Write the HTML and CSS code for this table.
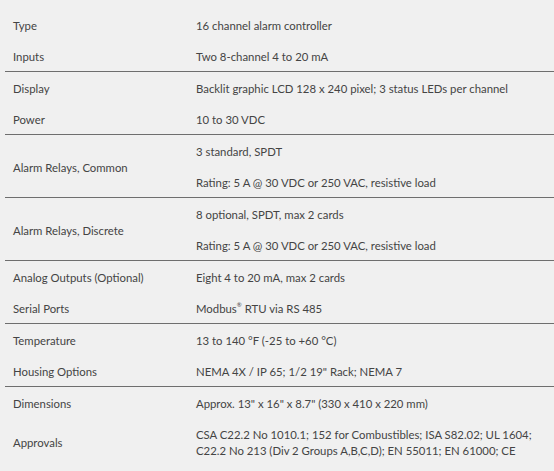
FILE: index.html
```html
<!DOCTYPE html>
<html>
<head>
<meta charset="utf-8">
<link rel="stylesheet" href="styles.css">
</head>
<body>
<table class="specs">
  <tbody class="group">
    <tr><td class="label">Type</td><td class="value">16 channel alarm controller</td></tr>
    <tr><td class="label">Inputs</td><td class="value">Two 8-channel 4 to 20 mA</td></tr>
  </tbody>
  <tbody class="group">
    <tr><td class="label">Display</td><td class="value">Backlit graphic LCD 128 x 240 pixel; 3 status LEDs per channel</td></tr>
    <tr><td class="label">Power</td><td class="value">10 to 30 VDC</td></tr>
  </tbody>
  <tbody class="group">
    <tr><td class="label" rowspan="2">Alarm Relays, Common</td><td class="value">3 standard, SPDT</td></tr>
    <tr><td class="value">Rating: 5 A @ 30 VDC or 250 VAC, resistive load</td></tr>
  </tbody>
  <tbody class="group">
    <tr><td class="label" rowspan="2">Alarm Relays, Discrete</td><td class="value">8 optional, SPDT, max 2 cards</td></tr>
    <tr><td class="value">Rating: 5 A @ 30 VDC or 250 VAC, resistive load</td></tr>
  </tbody>
  <tbody class="group">
    <tr><td class="label">Analog Outputs (Optional)</td><td class="value">Eight 4 to 20 mA, max 2 cards</td></tr>
    <tr><td class="label">Serial Ports</td><td class="value">Modbus<sup class="mark">®</sup> RTU via RS 485</td></tr>
  </tbody>
  <tbody class="group">
    <tr><td class="label">Temperature</td><td class="value">13 to 140 °F (-25 to +60 °C)</td></tr>
    <tr><td class="label">Housing Options</td><td class="value">NEMA 4X / IP 65; 1/2 19" Rack; NEMA 7</td></tr>
  </tbody>
  <tbody class="group last">
    <tr><td class="label">Dimensions</td><td class="value">Approx. 13" x 16" x 8.7" (330 x 410 x 220 mm)</td></tr>
    <tr><td class="label">Approvals</td><td class="value">CSA C22.2 No 1010.1; 152 for Combustibles; ISA S82.02; UL 1604;<br>C22.2 No 213 (Div 2 Groups A,B,C,D); EN 55011; EN 61000; CE</td></tr>
  </tbody>
</table>
</body>
</html>
```

FILE: styles.css
```css
html, body {
  background: #f0f0f0;
}
body {
  margin: 9px 0 0 5px;
  font-family: Lato, "Open Sans", sans-serif;
  font-size: 11.35px;
  color: #444444;
}
.specs {
  border-collapse: collapse;
  width: 549px;
}
.group {
  border-bottom: 1px solid #6e6e6e;
}
.group.last {
  border-bottom: none;
}
.label {
  width: 167px;
  padding: 9px 8px 6px 8px;
  line-height: 16px;
  vertical-align: middle;
  text-align: left;
  white-space: nowrap;
}
.value {
  padding: 9px 8px 6px 8px;
  line-height: 16px;
  vertical-align: middle;
  white-space: nowrap;
}
.mark {
  font-size: 6px;
  line-height: 0;
  vertical-align: 6px;
}
```
